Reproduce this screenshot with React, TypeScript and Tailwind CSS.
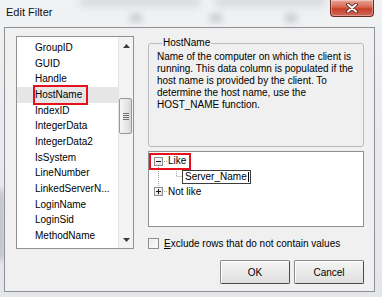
import React from "react";

function TreeBox({ plus }: { plus?: boolean }) {
  return (
    <svg width="9" height="9" viewBox="0 0 9 9" className="block shrink-0">
      <defs>
        <linearGradient id={plus ? "gp" : "gm"} x1="0" y1="0" x2="1" y2="1">
          <stop offset="0" stopColor="#ffffff" />
          <stop offset="1" stopColor="#dcdcdc" />
        </linearGradient>
      </defs>
      <rect x="0.5" y="0.5" width="8" height="8" fill={`url(#${plus ? "gp" : "gm"})`} stroke="#8f8f8f" />
      <line x1="2" y1="4.5" x2="7" y2="4.5" stroke="#1a1a1a" />
      {plus && <line x1="4.5" y1="2" x2="4.5" y2="7" stroke="#1a1a1a" />}
    </svg>
  );
}

function Arrow({ down }: { down?: boolean }) {
  return (
    <svg width="7" height="4" viewBox="0 0 7 4" className="block">
      {down ? <polygon points="0,0 7,0 3.5,4" fill="#3c3c3c" /> : <polygon points="0,4 7,4 3.5,0" fill="#3c3c3c" />}
    </svg>
  );
}

export default function App() {
  const items = [
    "GroupID",
    "GUID",
    "Handle",
    "HostName",
    "IndexID",
    "IntegerData",
    "IntegerData2",
    "IsSystem",
    "LineNumber",
    "LinkedServerN...",
    "LoginName",
    "LoginSid",
    "MethodName",
  ];
  const desc = [
    "Name of the computer on which the client is",
    "running. This data column is populated if the",
    "host name is provided by the client. To",
    "determine the host name, use the",
    "HOST_NAME function.",
  ];
  return (
    <div className="relative w-[382px] h-[297px] overflow-hidden bg-[linear-gradient(180deg,#f1f2f4_0%,#e9ebee_40%,#e4e6e9_100%)] font-['Liberation_Sans',Arial,sans-serif] text-[10px] text-black flex flex-col">
      {/* blurred glass backdrop */}
      <div className="absolute left-[80px] top-[-3px] w-[120px] h-[9px] bg-[#bfc2c5] blur-[4px] opacity-60" />
      <div className="absolute left-[215px] top-[-3px] w-[110px] h-[9px] bg-[#bfc2c5] blur-[4px] opacity-60" />
      <div className="absolute left-[130px] top-[14px] w-[12px] h-[8px] bg-[#9fa3a7] blur-[3px] opacity-50" />
      <div className="absolute left-[210px] top-[14px] w-[12px] h-[8px] bg-[#9fa3a7] blur-[3px] opacity-50" />
      <div className="absolute left-[285px] top-[14px] w-[12px] h-[8px] bg-[#9fa3a7] blur-[3px] opacity-50" />
      <div className="absolute left-[-4px] top-[190px] w-[8px] h-[70px] bg-[#9da1a5] blur-[3px] opacity-60" />

      {/* title bar */}
      <div className="relative h-[27px] flex items-start justify-between pl-[6px] pr-[8px]">
        <span className="mt-[6px] text-[11px] leading-[13px] text-[#111]">Edit Filter</span>
        <div className="w-[44px] h-[17px] rounded-b-[4px] border border-t-0 border-[#6b2a20] bg-[linear-gradient(180deg,#e9a79a_0%,#d8644f_45%,#c5412c_55%,#d2685a_100%)] flex items-center justify-center shadow-[inset_0_0_0_1px_rgba(255,255,255,0.35)]">
          <svg width="12" height="10" viewBox="0 0 12 10">
            <path d="M2 1.5 L10 8.5 M10 1.5 L2 8.5" stroke="#4a1d16" strokeWidth="3.6" strokeLinecap="round" />
            <path d="M2 1.5 L10 8.5 M10 1.5 L2 8.5" stroke="#ffffff" strokeWidth="2" strokeLinecap="round" />
          </svg>
        </div>
      </div>

      {/* client area */}
      <div className="relative ml-[4px] w-[371px] h-[265px] border border-[#8d9094] bg-[#f0f0f0] pl-[11px] pt-[8px] pr-[10px] flex gap-[14px]">
        {/* list box */}
        <div className="w-[118px] h-[213px] border border-[#8e9196] bg-white flex">
          <div className="w-[101px] overflow-hidden pt-[3.17px]">
            {items.map((it) => (
              <div
                key={it}
                className={`relative h-[15.67px] leading-[15.67px] pl-[18px] whitespace-nowrap ${
                  it === "HostName" ? "bg-[#e6e6e6]" : ""
                }`}
              >
                {it}
                {it === "HostName" && (
                  <div className="absolute left-[16px] top-[-2px] w-[55px] h-[20px] border-2 border-[#e3121c]" />
                )}
              </div>
            ))}
          </div>
          <div className="w-[15px] flex flex-col bg-[#f3f3f3] border-l border-[#e4e4e4]">
            <div className="h-[17px] flex items-center justify-center">
              <Arrow />
            </div>
            <div className="h-[44px]" />
            <div className="h-[36px] mr-[1px] rounded-[2px] border border-[#989898] bg-[linear-gradient(90deg,#f7f7f7,#e6e6e6_60%,#d6d6d6)] flex flex-col items-center justify-center gap-[1px]">
              <div className="w-[6px] h-[1px] bg-[#6e6e6e]" />
              <div className="w-[6px] h-[1px] bg-[#6e6e6e]" />
              <div className="w-[6px] h-[1px] bg-[#6e6e6e]" />
              <div className="w-[6px] h-[1px] bg-[#6e6e6e]" />
            </div>
            <div className="flex-1" />
            <div className="h-[17px] flex items-center justify-center">
              <Arrow down />
            </div>
          </div>
        </div>

        {/* right column */}
        <div className="w-[216px] flex flex-col">
          <fieldset className="h-[111px] border border-[#b9bcbf] rounded-[3px] pl-[8px] pr-[4px]">
            <legend className="ml-[5px] px-[1px] leading-[14px]">HostName</legend>
            <div className="pt-[1px]">
              {desc.map((l) => (
                <div key={l} className="leading-[12px] whitespace-nowrap">
                  {l}
                </div>
              ))}
            </div>
          </fieldset>

          {/* tree */}
          <div className="relative mt-[4px] h-[76px] border border-[#8e9196] bg-white pt-[1px]">
            <svg className="absolute left-0 top-0" width="214" height="74" viewBox="0 0 214 74">
              <g stroke="#a3a3a3" strokeDasharray="1 1" fill="none">
                <line x1="9.5" y1="15" x2="9.5" y2="35" />
                <line x1="15" y1="9.5" x2="19" y2="9.5" />
                <line x1="15" y1="39.5" x2="19" y2="39.5" />
                <line x1="27.5" y1="17" x2="27.5" y2="24" />
                <line x1="27.5" y1="24.5" x2="33" y2="24.5" />
              </g>
            </svg>
            <div className="relative h-[16px] flex items-center pl-[5px]">
              <TreeBox />
              <span className="ml-[5px] leading-[16px]">Like</span>
              <div className="absolute left-0 top-0 w-[42px] h-[17px] border-2 border-[#e3121c]" />
            </div>
            <div className="h-[15px] pl-[33px] pt-[1px]">
              <div className="relative w-[69px] h-[14px] border border-[#3c3c3c] bg-white pl-[2px] leading-[12px] flex items-center">
                <span>Server_Name</span>
                <div className="ml-[1px] w-[1px] h-[10px] bg-black" />
              </div>
            </div>
            <div className="h-[15px] flex items-center pl-[5px]">
              <TreeBox plus />
              <span className="ml-[5px]">Not like</span>
            </div>
          </div>

          {/* checkbox */}
          <div className="mt-[11px] h-[11px] flex items-center">
            <div className="w-[11px] h-[11px] border border-[#8e8f8f] bg-[linear-gradient(135deg,#e8e8e8,#ffffff)] shadow-[inset_0_0_0_1px_#f4f4f4]" />
            <span className="ml-[5px] leading-[11px] whitespace-nowrap">
              <span className="underline">E</span>xclude rows that do not contain values
            </span>
          </div>

          {/* buttons */}
          <div className="mt-[11px] flex justify-end gap-[4px]">
            <div className="w-[70px] h-[24px] rounded-[2px] border border-[#8a8a8a] border-r-[#4a4a4a] border-b-[#4a4a4a] bg-[linear-gradient(180deg,#f4f4f4,#ebebeb_50%,#dedede)] shadow-[inset_1px_1px_0_#ffffff] flex items-center justify-center">
              OK
            </div>
            <div className="w-[70px] h-[24px] rounded-[2px] border border-[#8a8a8a] border-r-[#4a4a4a] border-b-[#4a4a4a] bg-[linear-gradient(180deg,#f4f4f4,#ebebeb_50%,#dedede)] shadow-[inset_1px_1px_0_#ffffff] flex items-center justify-center">
              Cancel
            </div>
          </div>
        </div>
      </div>
    </div>
  );
}
